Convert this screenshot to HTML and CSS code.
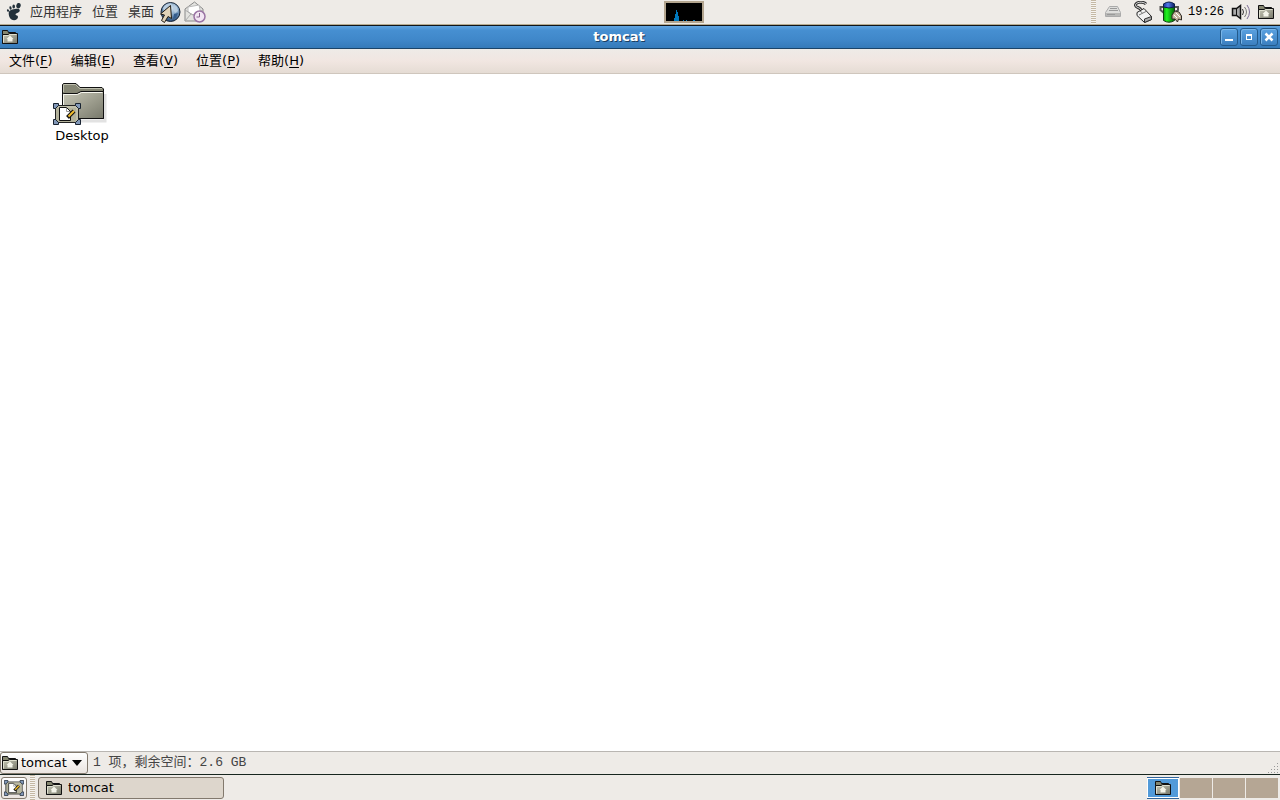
FILE: index.html
```html
<!DOCTYPE html>
<html lang="zh-CN">
<head>
    <meta charset="UTF-8">
    <meta name="viewport" content="width=device-width, initial-scale=1">
    <title>tomcat</title>
    <link rel="stylesheet" href="styles.css">
</head>
<body>

    <!-- Shared icons -->
    <svg class="defs" aria-hidden="true">
        <defs>
            <linearGradient id="folder-fill" x1="0" y1="0" x2="1" y2="1">
                <stop offset="0" stop-color="#c9c9b8"/>
                <stop offset="1" stop-color="#77786a"/>
            </linearGradient>
            <linearGradient id="battery-fill">
                <stop offset="0" stop-color="#07a40a"/>
                <stop offset=".3" stop-color="#20f51e"/>
                <stop offset="1" stop-color="#045f08"/>
            </linearGradient>
            <linearGradient id="battery-cap">
                <stop offset="0" stop-color="#16309b"/>
                <stop offset=".4" stop-color="#527ae8"/>
                <stop offset="1" stop-color="#0a1c60"/>
            </linearGradient>
            <radialGradient id="globe-fill" cx=".55" cy=".3" r=".7">
                <stop offset="0" stop-color="#d5e4f0"/>
                <stop offset=".5" stop-color="#82a4c5"/>
                <stop offset="1" stop-color="#274a75"/>
            </radialGradient>
            <symbol id="home-folder" viewBox="0 0 16 16">
                <path d="M.5 14.500V1.500H5.500L6.500 3.500H13.500V5" fill="#77786a" stroke="#111"/>
                <path d="M1 2H5L6 4H13V6H1Z" fill="#85866f"/>
                <path d="M.5 5.500H6L7.500 4.500H15.500V14.500H.5Z" fill="url(#folder-fill)" stroke="#111"/>
                <path d="M1.500 13.500V6.500H6.500L8 5.500H14.500" fill="none" stroke="#dedfce"/>
                <path d="M8 6.500L11.500 10H10.500V12.500H5.500V10H4.500Z" fill="#f4f4e9"/>
            </symbol>
            <symbol id="desk" viewBox="0 0 28 22">
                <path d="M2.500 2.500H25.500V19.500H2.500Z" fill="#b3b29b" stroke="#222"/>
                <path d="M4 4H24V18" fill="none" stroke="#cfceba"/>
                <path d="M.5 .5H5.500V2.500L2.500 5.500H.5ZM27.500 .5H22.500V2.500L25.500 5.500H27.500ZM.5 21.500H5.500V19.500L2.500 16.500H.5ZM27.500 21.500H22.500V19.500L25.500 16.500H27.500Z" fill="#8298b8" stroke="#182331"/>
                <path d="M6.500 4.500H13.500L17.500 8.500V17.500H6.500Z" fill="#fff" stroke="#111"/>
                <path d="M13.500 5V8.500H17" fill="none" stroke="#999"/>
                <path d="M14.500 14.500L21 8" fill="none" stroke="#111" stroke-width="4"/>
                <path d="M15.500 13.500L21 8" fill="none" stroke="#f2bd2c" stroke-width="2"/>
            </symbol>
        </defs>
    </svg>

    <!-- Top panel -->
    <header class="panel panel-top">
        <nav class="panel-menu">
            <button class="panel-item" type="button">
                <svg class="foot" viewBox="0 0 16 18">
                    <path d="M9 6C13 5 15 7 13 9C11.500 10.500 9.500 10 9.500 11.500C9.500 12.500 12 12 12 14C12 17 8 18 5.500 16.500C3 15 1.500 9 4 7.500C5.500 6.500 7 6.500 9 6Z" fill="#22303a"/>
                    <ellipse cx="12.500" cy="2.700" rx="2.200" ry="2.700" transform="rotate(15 12.500 2.700)" fill="#22303a"/>
                    <ellipse cx="7.700" cy="3.500" rx="1.300" ry="2" fill="#22303a"/>
                    <ellipse cx="4.500" cy="5" rx="1.100" ry="1.700" transform="rotate(-15 4.500 5)" fill="#22303a"/>
                    <ellipse cx="2" cy="7.500" rx="1" ry="1.400" transform="rotate(-25 2 7.500)" fill="#22303a"/>
                </svg>
                应用程序
            </button>
            <button class="panel-item" type="button">位置</button>
            <button class="panel-item" type="button">桌面</button>
        </nav>
        <div class="launchers">
            <button class="launcher" type="button" aria-label="浏览器">
                <svg viewBox="0 0 22 22">
                    <circle cx="11.500" cy="11" r="9.500" fill="url(#globe-fill)" stroke="#172435"/>
                    <path d="M4 7C7 2 11 2 13 3L11 6L7 7L5 11Z" fill="#b9cde0"/>
                    <path d="M15 4L18 6L19 10L16 12L14 8Z" fill="#b9cde0"/>
                    <path d="M15 13L19 12L17 17L14 18Z" fill="#365e8e"/>
                    <path d="M11.500 4.500L12.500 17.500L9 15.500L5.500 21.500L2.500 19.500L5.500 14L1.500 13Z" fill="#e2d4b9" stroke="#211b13"/>
                </svg>
            </button>
            <button class="launcher" type="button" aria-label="电子邮件">
                <svg viewBox="0 0 22 22">
                    <path d="M1 8L10.500 1L19 8V20H1Z" fill="#e3e3e0" stroke="#898989"/>
                    <path d="M4 6L15 4L16.500 11L9 14L4 11Z" fill="#fff" stroke="#bbb"/>
                    <path d="M1 9L9 14L19 9M1 20L7 13" fill="none" stroke="#aaa"/>
                    <circle cx="15.500" cy="15.500" r="5.500" fill="#f2e6f3" stroke="#9a74a4" stroke-width="1.500"/>
                    <path d="M15.500 12V16H12.500" fill="none" stroke="#87628f"/>
                </svg>
            </button>
        </div>
        <div class="monitor">
            <svg viewBox="0 0 36 18">
                <path d="M8 18V15H9V11H10V7H11V9H12V13H13V18ZM17 18V17H18V18ZM20 18V17H21V18ZM27 18V17H29V18Z" fill="#0078bd"/>
            </svg>
        </div>
        <div class="tray">
            <span class="grip"></span>
            <svg class="tray-drive" viewBox="0 0 16 12">
                <path d="M4.500 .5H12.500L15.500 6.500V10.500H.5V6.500Z" fill="#dededc" stroke="#aaa"/>
                <path d="M1 7H15V10H1Z" fill="#b7b7b5"/>
                <path d="M5 2.500H12M4 4.500H13M2 8.500H10" fill="none" stroke="#999"/>
            </svg>
            <svg class="tray-mouse" viewBox="0 0 18 22">
                <path d="M12 3C9 0 1 1 1.500 4.500C2 7 6 6 7 9" fill="none" stroke="#333" stroke-width="3"/>
                <path d="M12 3C9 0 1 1 1.500 4.500C2 7 6 6 7 9" fill="none" stroke="#ddd"/>
                <path d="M3 11.500L10 7.500L17.500 15.500V18.500L10.500 21.500L3 14.500Z" fill="#f2f2f2" stroke="#222"/>
                <path d="M10.500 18L17.500 15.500V18.500L10.500 21.500Z" fill="#aaa" stroke="#333"/>
                <path d="M5 14L12 10.500M8.500 12L6 10" fill="none" stroke="#777"/>
            </svg>
            <svg class="tray-battery" viewBox="0 0 24 22">
                <path d="M5 6H1.500V9L5 12M15 6H19V9L15 12" fill="none" stroke="#555" stroke-width="2"/>
                <path d="M4.500 3V19.500Q10 23 15.500 19.500V3Z" fill="url(#battery-fill)" stroke="#123f12"/>
                <path d="M4.500 3Q10-1 15.500 3V6Q10 8 4.500 6Z" fill="url(#battery-cap)" stroke="#0b1e4c"/>
                <path d="M13 14L16 10L20 11L22.500 15V19L19.500 18L18.500 21L16 18H13Z" fill="#c5b59f" stroke="#302b25"/>
                <path d="M15 14L18 17M17 12L21 16" stroke="#fff"/>
            </svg>
            <time class="clock">19:26</time>
            <svg class="tray-volume" viewBox="0 0 20 16">
                <path d="M1.500 4.500H5.500L9.500 1.500V14.500L5.500 11.500H1.500Z" fill="#aaa" stroke="#111" stroke-width="1.500"/>
                <path d="M5.500 5V11" stroke="#111"/>
                <path d="M11.500 5Q13.500 8 11.500 11" fill="none" stroke="#333"/>
                <path d="M13.500 3Q17.500 8 13.500 13" fill="none" stroke="#777"/>
                <path d="M16 1Q21 8 16 15" fill="none" stroke="#7c6c96"/>
            </svg>
            <svg class="icon"><use href="#home-folder"/></svg>
        </div>
    </header>

    <!-- File manager window -->
    <main class="window">
        <div class="titlebar">
            <svg class="icon"><use href="#home-folder"/></svg>
            <h1 class="title">tomcat</h1>
            <div class="window-buttons">
                <button class="window-button" type="button" aria-label="最小化">
                    <svg viewBox="0 0 16 16"><path d="M4 11H12" stroke="#fff" stroke-width="2"/></svg>
                </button>
                <button class="window-button" type="button" aria-label="最大化">
                    <svg viewBox="0 0 16 16"><path d="M5 5H11V11H5ZM6 7V10H10V7Z" fill="#fff" fill-rule="evenodd"/></svg>
                </button>
                <button class="window-button" type="button" aria-label="关闭">
                    <svg viewBox="0 0 16 16"><path d="M4.500 4.500L11.500 11.500M11.500 4.500L4.500 11.500" stroke="#fff" stroke-width="2.500"/></svg>
                </button>
            </div>
        </div>
        <nav class="menubar">
            <button class="menu" type="button">文件(<u>F</u>)</button>
            <button class="menu" type="button">编辑(<u>E</u>)</button>
            <button class="menu" type="button">查看(<u>V</u>)</button>
            <button class="menu" type="button">位置(<u>P</u>)</button>
            <button class="menu" type="button">帮助(<u>H</u>)</button>
        </nav>
        <section class="files">
            <a class="file" href="#Desktop">
                <svg class="file-icon" viewBox="0 0 60 44">
                    <path d="M14 39H53V12" fill="none" stroke="#e2e2e2" stroke-width="3"/>
                    <path d="M10.500 36.500V2.500L11.500 1.500H24L28 5.500H50L51.500 7V36.500Z" fill="#858674" stroke="#111"/>
                    <path d="M11.500 10V3L12 2.500H23.500L27.500 6.500H50" fill="none" stroke="#bfc0af"/>
                    <path d="M10.500 36.500V12.500L11.500 11.500H25L29 9.500H51.500V36.500Z" fill="url(#folder-fill)" stroke="#111"/>
                    <path d="M11.500 35.500V12.500H25.500L29.500 10.500H50.500" fill="none" stroke="#f6f6ee"/>
                    <use href="#desk" x="1" y="21" width="28" height="22"/>
                </svg>
                Desktop
            </a>
        </section>
        <footer class="statusbar">
            <button class="location" type="button">
                <svg class="icon"><use href="#home-folder"/></svg>
                tomcat
                <span class="arrow"></span>
            </button>
            <span class="status">1 项，剩余空间：2.6 GB</span>
            <svg class="resize" viewBox="0 0 12 12">
                <path d="M9 1h1v1h-1zM6 4h1v1h-1zM9 4h1v1h-1zM3 7h1v1h-1zM6 7h1v1h-1zM9 7h1v1h-1zM0 10h1v1h-1zM3 10h1v1h-1zM6 10h1v1h-1zM9 10h1v1h-1z" fill="#999"/>
            </svg>
        </footer>
    </main>

    <!-- Bottom panel -->
    <footer class="panel panel-bottom">
        <button class="show-desktop" type="button" aria-label="显示桌面">
            <svg><use href="#desk"/></svg>
        </button>
        <span class="grip"></span>
        <button class="task" type="button">
            <svg class="icon"><use href="#home-folder"/></svg>
            tomcat
        </button>
        <div class="workspaces">
            <button class="workspace current" type="button" aria-label="工作区 1">
                <svg class="icon"><use href="#home-folder"/></svg>
            </button>
            <button class="workspace" type="button" aria-label="工作区 2"></button>
            <button class="workspace" type="button" aria-label="工作区 3"></button>
            <button class="workspace" type="button" aria-label="工作区 4"></button>
        </div>
    </footer>

</body>
</html>
```
FILE: styles.css
```css
* {
    box-sizing: border-box;
}

body {
    display: flex;
    flex-direction: column;
    height: 100vh;
    margin: 0;
    overflow: hidden;
    background: #fff;
    color: #000;
    font: 13px/16px "DejaVu Sans", "Noto Sans CJK SC", sans-serif;
}

button {
    margin: 0;
    padding: 0;
    border: 0;
    background: none;
    color: inherit;
    font: inherit;
}

svg {
    display: block;
    flex: none;
}

.defs {
    position: absolute;
    width: 0;
    height: 0;
}

.icon {
    width: 16px;
    height: 16px;
}

.grip {
    width: 5px;
    align-self: stretch;
    background: repeating-linear-gradient(#c4b8a4 0 1px, #f6f4f0 1px 2px);
}

/* Panels */
.panel {
    align-items: center;
    flex: none;
    height: 25px;
    background: #eeebe7;
}

.panel-top {
    display: grid;
    grid-template-columns: auto auto 1fr auto;
    border-bottom: 1px solid #b7ac91;
}

.panel-menu {
    display: flex;
    gap: 10px;
    padding-left: 6px;
    color: #333;
}

.panel-item {
    display: flex;
    align-items: center;
    gap: 8px;
}

.foot {
    width: 16px;
    height: 18px;
}

.launchers {
    display: flex;
    gap: 3px;
    padding-left: 5px;
}

.launcher svg {
    width: 22px;
    height: 22px;
}

.monitor {
    justify-self: center;
    margin-left: 70px;
    border: 2px solid #b3a58f;
    background: #000;
}

.monitor svg {
    width: 36px;
    height: 18px;
}

.tray {
    display: flex;
    align-items: center;
    align-self: stretch;
    gap: 7px;
    padding-right: 6px;
}

.tray-drive {
    width: 16px;
    height: 12px;
    margin: 0 6px 0 2px;
}

.tray-mouse {
    width: 18px;
    height: 22px;
}

.tray-battery {
    width: 24px;
    height: 22px;
}

.tray-volume {
    width: 20px;
    height: 16px;
}

.clock {
    margin-left: -2px;
    font: 12px/16px "Liberation Mono", monospace;
}

/* Window */
.window {
    display: flex;
    flex: 1;
    flex-direction: column;
    min-height: 0;
}

.titlebar {
    display: flex;
    align-items: center;
    height: 24px;
    padding: 0 2px;
    border-top: 1px solid #10151a;
    border-bottom: 1px solid #1b4468;
    background: linear-gradient(#62a5e0, #468fd1 20%, #4088ca 60%, #357ab9);
    color: #fff;
}

.title {
    flex: 1;
    margin: 0;
    font-size: 13px;
    line-height: 16px;
    text-align: center;
    text-shadow: 1px 1px #1c3f60;
}

.window-buttons {
    display: flex;
    gap: 2px;
}

.window-button {
    border: 1px solid #235a8b;
    border-radius: 3px;
    background: linear-gradient(#5ba2e1, #3b7fbf);
    box-shadow: inset 1px 1px #79b5e8;
}

.window-button svg {
    width: 16px;
    height: 16px;
}

.menubar {
    display: flex;
    align-items: center;
    gap: 18px;
    height: 25px;
    padding: 0 9px;
    border-bottom: 1px solid #cfc6bd;
    background: linear-gradient(#eeebe7, #f1e6e1 50%, #e5dcd4);
}

.menu u {
    text-underline-offset: 2px;
}

.files {
    display: flex;
    flex: 1;
    align-items: flex-start;
    padding: 8px 52px;
    background: #fff;
}

.file {
    display: flex;
    flex-direction: column;
    align-items: center;
    gap: 2px;
    color: #000;
    text-decoration: none;
}

.file-icon {
    width: 60px;
    height: 44px;
}

.statusbar {
    display: flex;
    align-items: center;
    height: 24px;
    border-top: 1px solid #b9b6b2;
    border-bottom: 1px solid #17261f;
    background: #eeebe7;
}

.location {
    display: flex;
    align-items: center;
    gap: 3px;
    height: 22px;
    padding: 0 5px 0 1px;
    border: 1px solid #82796d;
    border-radius: 3px;
    background: linear-gradient(#fff, #eae4df);
}

.arrow {
    margin-left: 2px;
    border: 5px solid transparent;
    border-top: 6px solid #000;
    border-bottom: 0;
}

.status {
    flex: 1;
    padding-left: 5px;
    color: #444;
    font: 13px/16px "Liberation Mono", "Noto Sans CJK SC", monospace;
}

.resize {
    align-self: flex-end;
    width: 12px;
    height: 12px;
}

/* Bottom panel */
.panel-bottom {
    display: flex;
    gap: 3px;
    padding: 0 2px 0 1px;
}

.show-desktop {
    padding: 2px;
    border: 1px solid #82796d;
    border-radius: 3px;
    background: linear-gradient(#fff, #eae4df);
}

.show-desktop svg {
    width: 20px;
    height: 16px;
}

.task {
    display: flex;
    align-items: center;
    gap: 6px;
    width: 186px;
    height: 22px;
    padding: 0 7px;
    border: 1px solid #82796d;
    border-radius: 3px;
    background: #ddd6cc;
}

.workspaces {
    display: flex;
    gap: 1px;
    margin-left: auto;
}

.workspace {
    display: grid;
    place-items: center;
    width: 32px;
    height: 20px;
    background: #b5a694;
}

.current {
    border: 1px solid #fff;
    background: #519ad9;
    box-shadow: 0 -1px #33659b, 0 1px #33659b;
}
```
